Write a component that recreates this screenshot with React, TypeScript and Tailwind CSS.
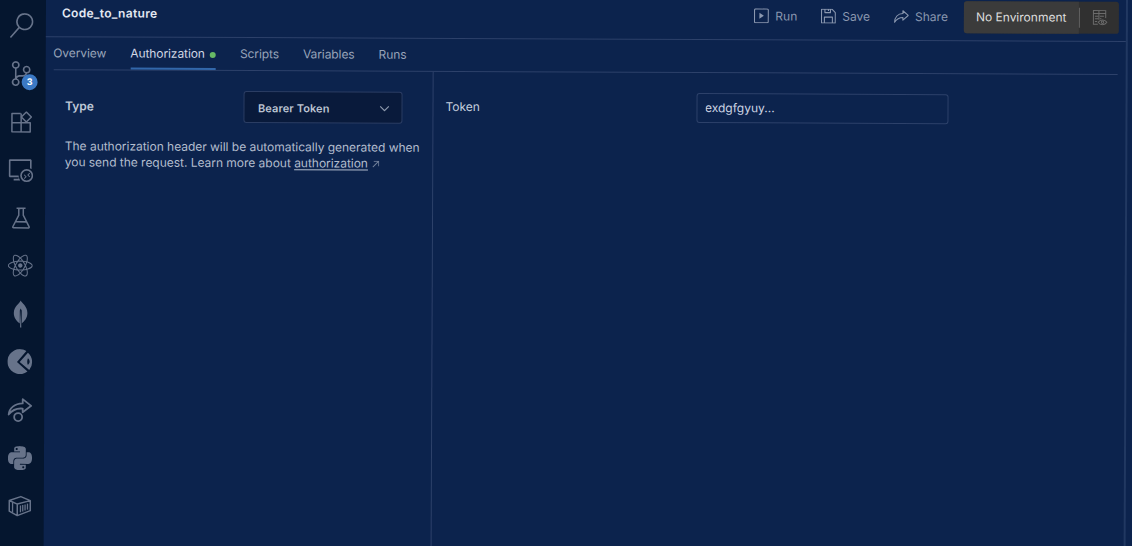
import type { ReactNode } from "react";
import { VscBeaker, VscRemoteExplorer, VscSearch, VscSourceControl } from "react-icons/vsc";
import { FaReact } from "react-icons/fa";
import { SiPython } from "react-icons/si";

function ExtensionsIcon() {
  return (
    <svg width="22" height="22" viewBox="0 0 22 22" fill="none" stroke="currentColor" strokeWidth="1.500" strokeLinejoin="round">
      <path d="M10.200 2.500H1.500v18.300h18.300v-9.200H1.500M10.700 2.500v18.300" />
      <path d="m15.900.9 5 5-5 5-5-5Z" />
    </svg>
  );
}

function LeafIcon() {
  return (
    <svg width="16" height="28" viewBox="0 0 16 28" fill="currentColor">
      <path d="M8 .5c1 2.500 6.800 5.500 6.800 12.500 0 5-2.600 8-5.700 10.300V10.500L8 8.500l-.8 2v13C3.800 21 1.200 17.800 1.200 13 1.200 6 7.200 3.500 8 .5Z" />
      <path d="M8 9.500 8.800 27.500H7.500Z" />
    </svg>
  );
}

function CodeCircleIcon() {
  return (
    <svg width="25" height="25" viewBox="0 0 24 24" fill="currentColor">
      <path d="M12 0a12 12 0 1 0 7.300 21.500L9.200 12.500 18.200 1.700A12 12 0 0 0 12 0Z" />
      <path d="M19.700 3.500 11.800 12.500l9.200 7.600A12 12 0 0 0 19.700 3.500Zm0 5.300c2.200 1.700 2.200 4.700 0 6.400-.9-2-.9-4.400 0-6.400Z" />
    </svg>
  );
}

function ForwardIcon() {
  return (
    <svg width="26" height="26" viewBox="0 0 26 26" fill="none" stroke="currentColor" strokeWidth="1.800" strokeLinejoin="round">
      <path d="M15.500 2 24 8.700l-8.500 6.500V11.500C10 11 5 13 1.500 17.500 2 11 7.500 6.500 15.500 6.300Z" />
      <circle cx="11" cy="20" r="4" />
    </svg>
  );
}

function ContainerIcon() {
  return (
    <svg width="24" height="24" viewBox="0 0 24 24" fill="none" stroke="currentColor" strokeWidth="1.500" strokeLinejoin="round">
      <path d="M1.500 6.500 13 2.500l9.500 4v10L9.500 21.500l-8-4.500ZM1.500 6.500l8 3.500 13-3.500M9.500 10v11.500" />
      <path d="M4.800 8.300v10.200M12.700 11.500v6.700M15 11v6.300M17.300 10.300v6.100M19.700 9.500v6" strokeWidth="1.300" />
    </svg>
  );
}

function RunIcon() {
  return (
    <svg width="15" height="15" viewBox="0 0 15 15" fill="none" stroke="currentColor" strokeWidth="1.100">
      <rect x=".6" y=".6" width="13.800" height="13.800" rx="1" />
      <path d="M5.500 4.500v6L10 7.500Z" fill="currentColor" stroke="none" />
    </svg>
  );
}

function SaveIcon() {
  return (
    <svg width="15" height="15" viewBox="0 0 15 15" fill="none" stroke="currentColor" strokeWidth="1.100" strokeLinejoin="round">
      <path d="M.6.6h10.400l3.400 3.400v10.400H.6ZM4 .5v3.500h5.500V.5M3.500 14.500V8.500h8v6M7.500 1v1.500" />
    </svg>
  );
}

function ShareIcon() {
  return (
    <svg width="15" height="13" viewBox="0 0 15 13" fill="none" stroke="currentColor" strokeWidth="1.100" strokeLinejoin="round">
      <path d="M9 .8 14.300 5.500 9 10.200V7.500C5.500 7.500 3 8.800.7 12.300.9 7.500 3.800 3.700 9 3.500Z" />
    </svg>
  );
}

function EnvironmentIcon() {
  return (
    <svg width="16" height="16" viewBox="0 0 16 16" fill="none" stroke="currentColor">
      <path d="M6 14.500H1.500V.8h12.300v7.500M1.500 3.800h12.300M3 6.500h3.300M8 6.500h4M3 9h3.300M8 9h1.500M3 11.700h2.300M7 1v9" />
      <path d="M6.300 12.500c2-3.200 6.700-3.200 8.700 0-2 3.200-6.700 3.200-8.700 0Z" />
      <circle cx="10.650" cy="12.500" r="1.200" />
    </svg>
  );
}

const sidebarIcons: { name: string; icon: ReactNode; badge?: string }[] = [
  { name: "Search", icon: <VscSearch size={25} /> },
  { name: "Source control", icon: <VscSourceControl size={25} />, badge: "3" },
  { name: "Extensions", icon: <ExtensionsIcon /> },
  { name: "Remote explorer", icon: <VscRemoteExplorer size={25} /> },
  { name: "Testing", icon: <VscBeaker size={24} /> },
  { name: "React", icon: <FaReact size={25} /> },
  { name: "MongoDB", icon: <LeafIcon /> },
  { name: "Code", icon: <CodeCircleIcon /> },
  { name: "Forward", icon: <ForwardIcon /> },
  { name: "Python", icon: <SiPython size={24} /> },
  { name: "Containers", icon: <ContainerIcon /> },
];

function Sidebar() {
  return (
    <nav className="flex w-[46px] shrink-0 flex-col bg-[#05162f] pt-[7.500px] pr-[3px] text-[#67738a]">
      {sidebarIcons.map((item) => (
        <div key={item.name} className="relative flex h-12 shrink-0 items-center justify-center" aria-label={item.name}>
          {item.icon}
          {item.badge && (
            <span className="absolute top-6 left-[22px] flex size-4 items-center justify-center rounded-full bg-[#3b79c5] text-[9px] font-bold text-white">
              {item.badge}
            </span>
          )}
        </div>
      ))}
    </nav>
  );
}

function Action({ icon, label }: { icon: ReactNode; label: string }) {
  return (
    <button className="flex items-center gap-1.5 text-[#8a97af]">
      {icon}
      <span>{label}</span>
    </button>
  );
}

function Header() {
  return (
    <header className="flex h-[43px] items-center border-b border-[#2d416a] pr-[7px] pb-[5px] pl-4">
      <h1 className="font-semibold tracking-[0.3px] text-[#e3e8f2]">Code_to_nature</h1>
      <div className="ml-auto flex items-center gap-6">
        <Action icon={<RunIcon />} label="Run" />
        <Action icon={<SaveIcon />} label="Save" />
        <Action icon={<ShareIcon />} label="Share" />
        <div className="-ml-2 flex h-8 w-[155px] items-center rounded-[3px] bg-[#303030]">
          <div className="flex h-full w-[115px] items-center rounded-l-[3px] bg-[#3b3b3b] pl-3 text-[#dedede]">
            No Environment
          </div>
          <div className="h-5 w-px bg-[#626262]" />
          <div className="flex flex-1 justify-center text-[#6b6b6b]">
            <EnvironmentIcon />
          </div>
        </div>
      </div>
    </header>
  );
}

function Tabs() {
  return (
    <div className="mr-2 ml-[7.500px] flex h-[33px] gap-6 border-b border-[#2d416a] tracking-[-0.080px] text-[#98a4b9]">
      <div className="pt-[7px]">Overview</div>
      <div className="flex items-start gap-[5px] border-b-2 border-[#3267aa] pt-[7px] text-[#d0d7e4]">
        <span>Authorization</span>
        <span className="mt-[7px] size-1.5 rounded-full bg-[#67b965]" />
      </div>
      <div className="pt-[7px]">Scripts</div>
      <div className="pt-[7px]">Variables</div>
      <div className="pt-[7px]">Runs</div>
    </div>
  );
}

function TypePanel() {
  return (
    <section className="w-[388px] shrink-0 border-r border-[#2d416a] pt-5 pl-[19.500px]">
      <div className="flex h-8 items-center">
        <div className="w-[178px] font-semibold text-[#bfc8d7]">Type</div>
        <button className="flex h-8 w-[159px] items-center justify-between rounded-[3px] border border-[#2b3d63] bg-[#091a3b] pt-px pr-3 pl-3.5 text-[11px] font-semibold tracking-[0.100px] text-[#bcc4d2]">
          Bearer Token
          <svg width="10" height="6" viewBox="0 0 10 6" fill="none" stroke="#8d99ad" strokeWidth="1.200">
            <path d="m.7.7 4.300 4.300L9.300.7" />
          </svg>
        </button>
      </div>
      <p className="mt-4 leading-4 tracking-[-0.027px] whitespace-nowrap text-[#b3bdce]">
        The authorization header will be automatically generated when
        <br />
        you send the request. Learn more about <a className="underline underline-offset-2">authorization</a>
        <svg className="ml-1 inline-block align-baseline" width="7" height="7" viewBox="0 0 7 7" fill="none" stroke="#71809b">
          <path d="M.5 6.500 6.500.5M1.500.5h5v5" />
        </svg>
      </p>
    </section>
  );
}

function TokenPanel() {
  return (
    <section className="flex-1 pt-[19px] pl-3">
      <div className="flex h-8 items-center">
        <label className="w-[250.500px] text-[#c5cfdf]">Token</label>
        <input
          className="h-[30px] w-[252px] rounded-[3px] border border-[#2d416a] bg-transparent px-2 pb-0.5 text-[#ccd5e4] outline-none"
          defaultValue="exdgfgyuy..."
        />
      </div>
    </section>
  );
}

export default function App() {
  return (
    <div className="h-[546px] w-[1132px] overflow-hidden bg-[#0c234d] font-['Inter','Liberation_Sans',sans-serif] text-[12px] leading-[18px]">
      <div className="-mt-1.5 flex h-[560px] w-[1142px] origin-top-left rotate-[0.25deg]">
        <Sidebar />
        <main className="flex w-[1082px] shrink-0 flex-col border-r-2 border-[#213861]">
          <Header />
          <Tabs />
          <div className="flex flex-1">
            <TypePanel />
            <TokenPanel />
          </div>
        </main>
      </div>
    </div>
  );
}
